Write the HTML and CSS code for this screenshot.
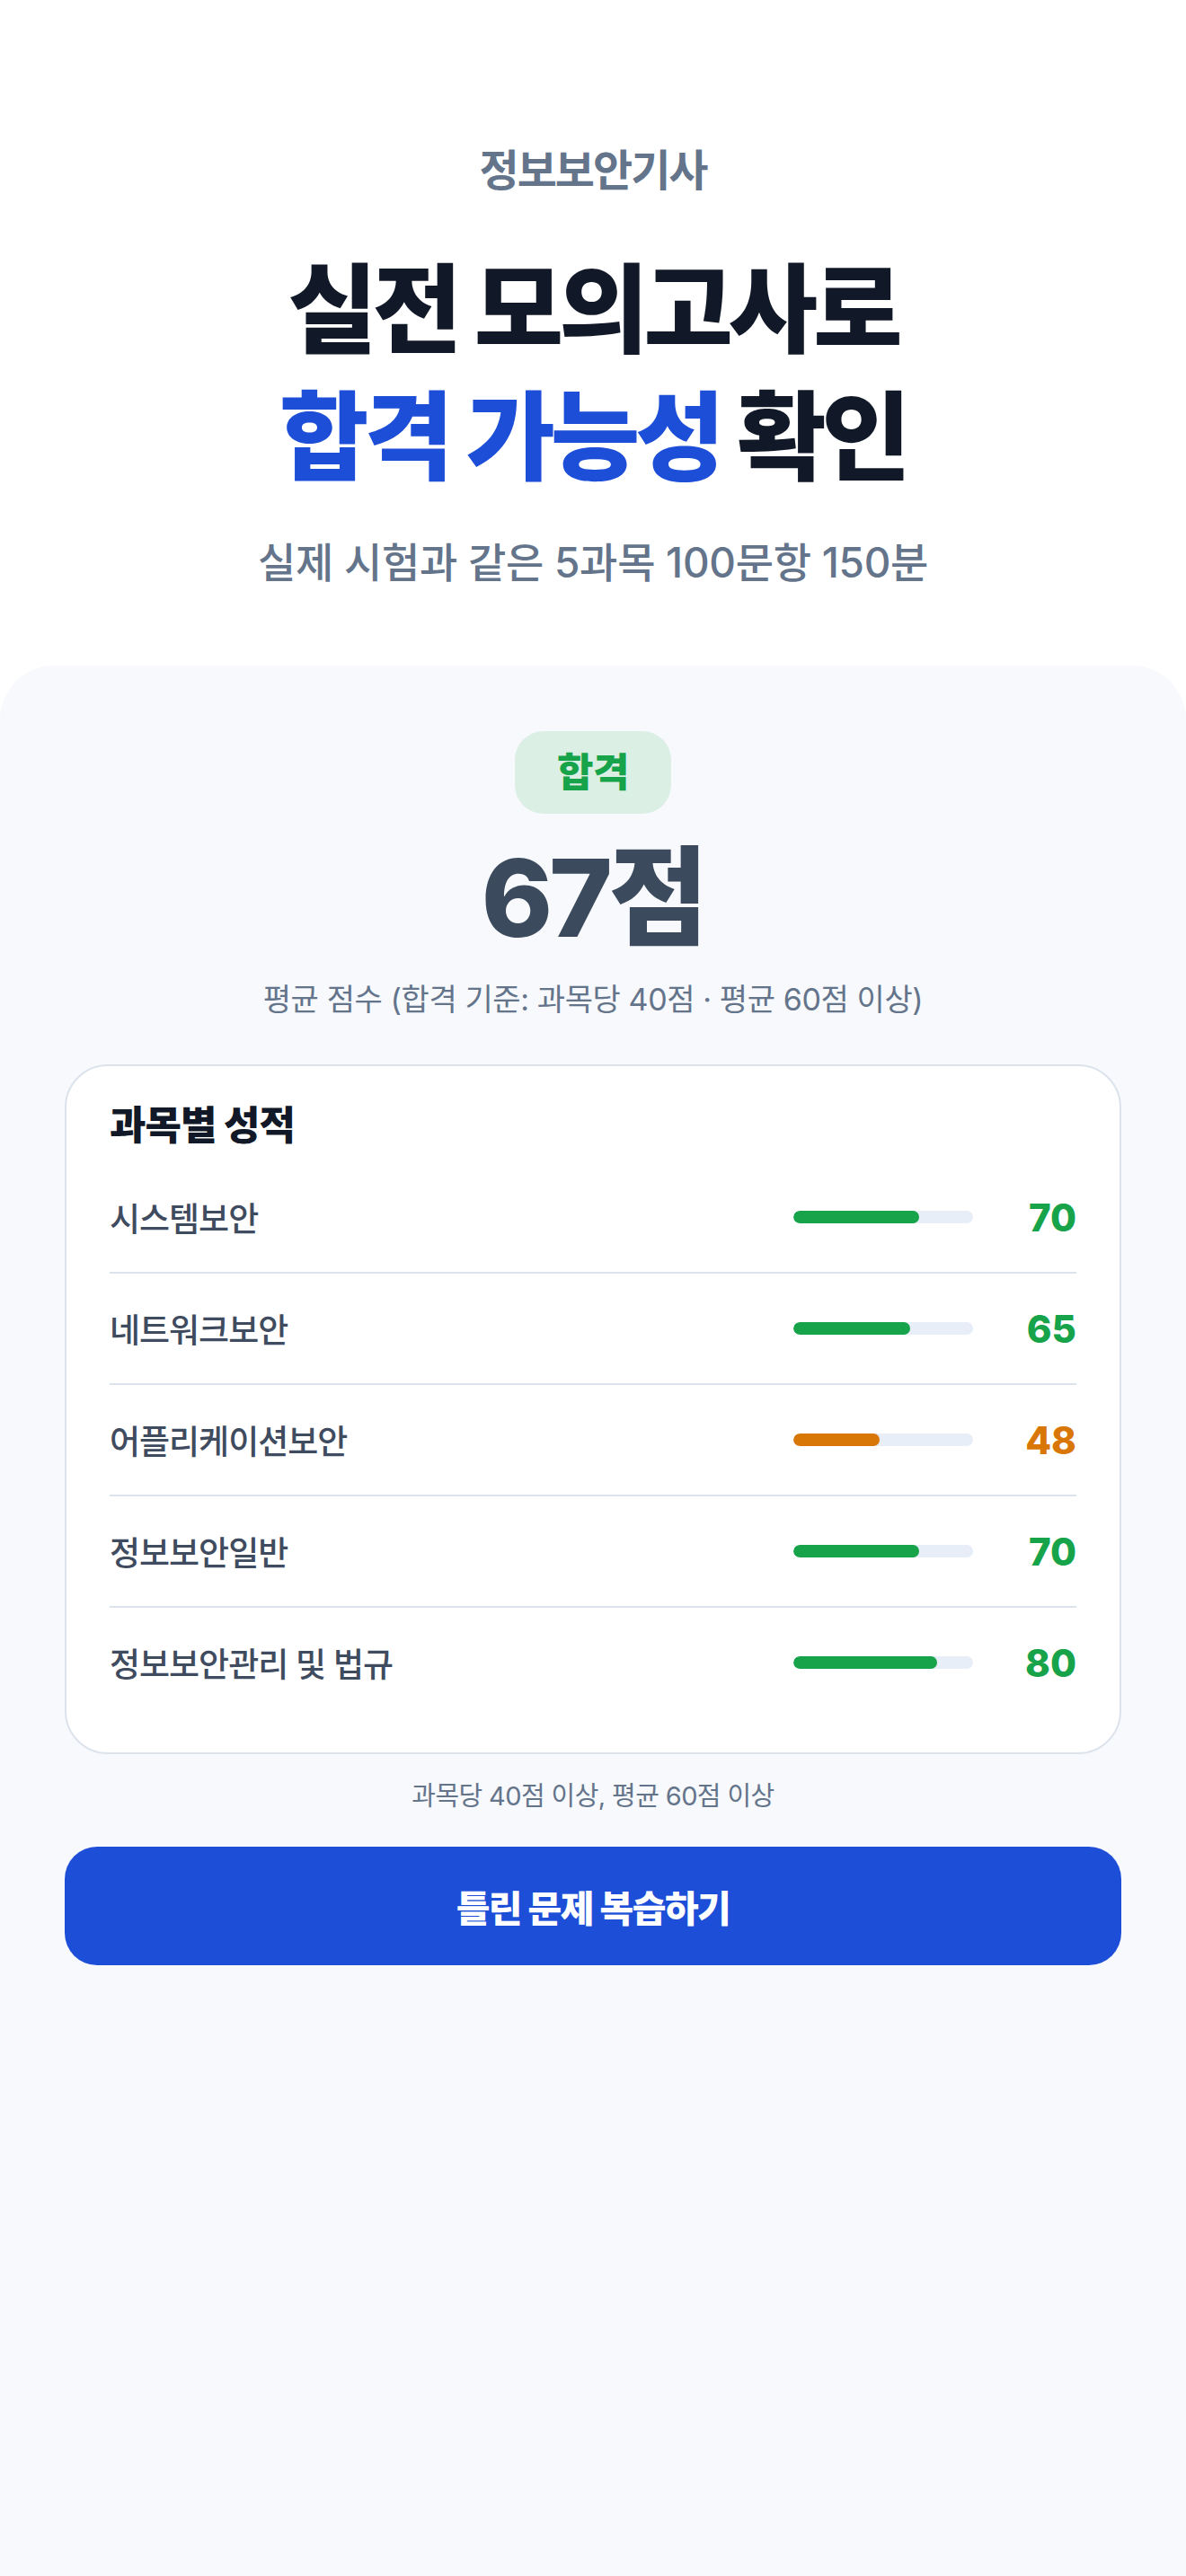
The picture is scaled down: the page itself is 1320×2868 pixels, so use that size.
FILE: index.html
```html
<!DOCTYPE html>
<html lang="ko">
<head>
  <meta charset="UTF-8">
  <title>정보보안기사 모의고사 결과</title>
  <link rel="stylesheet" href="styles.css">
</head>
<body>
  <main class="page">
    <!-- Intro -->
    <header class="hero">
      <p class="eyebrow">정보보안기사</p>
      <h1 class="title">실전 모의고사로<br><span class="accent">합격 가능성</span> 확인</h1>
      <p class="lead">실제 시험과 같은 5과목 100문항 150분</p>
    </header>

    <!-- Result panel -->
    <section class="result">
      <span class="badge">합격</span>
      <div class="score">67점</div>
      <p class="score-note">평균 점수 (합격 기준: 과목당 40점 · 평균 60점 이상)</p>

      <div class="card">
        <h2>과목별 성적</h2>
        <ul class="subjects">
          <li class="subject">
            <span class="name">시스템보안</span>
            <span class="bar"><span class="fill" style="width: 70%"></span></span>
            <span class="pts">70</span>
          </li>
          <li class="subject">
            <span class="name">네트워크보안</span>
            <span class="bar"><span class="fill" style="width: 65%"></span></span>
            <span class="pts">65</span>
          </li>
          <li class="subject warn">
            <span class="name">어플리케이션보안</span>
            <span class="bar"><span class="fill" style="width: 48%"></span></span>
            <span class="pts">48</span>
          </li>
          <li class="subject">
            <span class="name">정보보안일반</span>
            <span class="bar"><span class="fill" style="width: 70%"></span></span>
            <span class="pts">70</span>
          </li>
          <li class="subject">
            <span class="name">정보보안관리 및 법규</span>
            <span class="bar"><span class="fill" style="width: 80%"></span></span>
            <span class="pts">80</span>
          </li>
        </ul>
      </div>

      <p class="rule">과목당 40점 이상, 평균 60점 이상</p>
      <button class="review">틀린 문제 복습하기</button>
    </section>
  </main>
</body>
</html>
```

FILE: styles.css
```css
* {
  box-sizing: border-box;
}

body {
  margin: 0;
  padding: 0;
  background: #ffffff;
  font-family: Inter, "Noto Sans CJK KR", sans-serif;
  color: #111827;
}

.page {
  min-height: 100vh;
  display: flex;
  flex-direction: column;
}

p, h1, h2, ul {
  margin: 0;
  padding: 0;
}

/* Intro */
.hero {
  padding: 158px 0 85px;
  text-align: center;
}

.eyebrow {
  font-size: 48px;
  line-height: 64px;
  font-weight: 700;
  letter-spacing: -2px;
  color: #64748b;
}

.title {
  margin-top: 52px;
  font-size: 108px;
  line-height: 142px;
  font-weight: 800;
  letter-spacing: -5px;
  color: #111827;
}

.title .accent {
  color: #1d4ed8;
}

.lead {
  margin-top: 38px;
  font-size: 46px;
  line-height: 60px;
  font-weight: 500;
  letter-spacing: -0.3px;
  color: #64748b;
}

/* Result panel */
.result {
  flex: 1;
  background: #f7f9fc;
  border-radius: 60px 60px 0 0;
  padding: 73px 72px 80px;
  text-align: center;
}

.badge {
  display: inline-block;
  padding: 22px 47px;
  font-size: 44px;
  line-height: 48px;
  font-weight: 800;
  letter-spacing: -0.5px;
  color: #16a34a;
  background: #dcefe4;
  border-radius: 32px;
}

.score {
  margin-top: 29px;
  font-size: 120px;
  line-height: 130px;
  font-weight: 800;
  letter-spacing: -4px;
  color: #3c4a5d;
}

.score-note {
  margin-top: 25px;
  font-size: 34px;
  line-height: 46px;
  letter-spacing: -0.4px;
  color: #64748b;
}

.card {
  margin-top: 49px;
  padding: 37px 48px 39px;
  background: #ffffff;
  border: 2px solid #dce3ec;
  border-radius: 48px;
  text-align: left;
}

.card h2 {
  margin-bottom: 12px;
  font-size: 44px;
  line-height: 58px;
  font-weight: 800;
  letter-spacing: -1px;
  color: #111827;
}

.subjects {
  list-style: none;
}

.subject {
  display: flex;
  align-items: center;
  height: 124px;
  border-bottom: 2px solid #dde3ec;
}

.subject:last-child {
  height: 122px;
  border-bottom: none;
}

.subject .name {
  flex: 1;
  font-size: 37px;
  font-weight: 500;
  letter-spacing: -1px;
  color: #3f4b5e;
}

.bar {
  width: 200px;
  height: 14px;
  border-radius: 7px;
  background: #e8eef7;
  overflow: hidden;
}

.fill {
  display: block;
  height: 100%;
  border-radius: 7px;
  background: #16a34a;
}

.pts {
  width: 100px;
  margin-left: 15px;
  text-align: right;
  font-size: 42px;
  font-weight: 800;
  color: #16a34a;
}

.warn .fill {
  background: #d97706;
}

.warn .pts {
  color: #d97706;
}

.rule {
  margin-top: 27px;
  font-size: 29px;
  line-height: 40px;
  letter-spacing: -0.6px;
  color: #64748b;
}

.review {
  display: block;
  width: 100%;
  height: 132px;
  margin-top: 36px;
  border: none;
  border-radius: 36px;
  background: #1d4ed8;
  color: #ffffff;
  font-family: inherit;
  font-size: 41px;
  font-weight: 800;
  letter-spacing: -1.5px;
  cursor: pointer;
}
```
